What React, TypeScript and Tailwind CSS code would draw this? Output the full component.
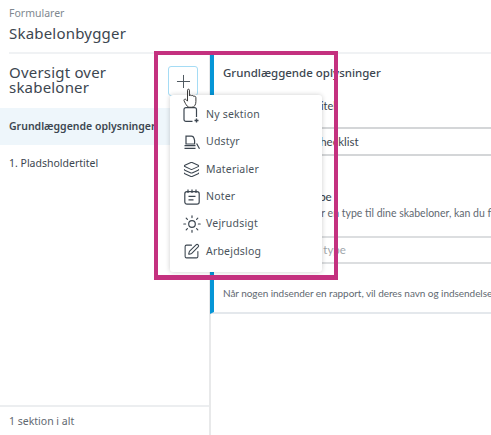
import { Plus, Layers, SquarePen } from 'lucide-react';

const InkStroke = '#3c4650';

const NewSectionIcon = () => (
  <svg width="17" height="16" viewBox="0 0 17 16" fill="none" stroke={InkStroke} strokeWidth="1.2">
    <path d="M9.5 14.4H3A2 2 0 0 1 1 12.4V2.6A2 2 0 0 1 3 .6H11.5A2 2 0 0 1 13.5 2.6V10" />
    <path d="M13.5 11.5v4M11.5 13.5h4" strokeWidth="1.4" />
  </svg>
);

const EquipmentIcon = () => (
  <svg width="16" height="15" viewBox="0 0 16 15" fill="none" stroke={InkStroke} strokeWidth="1.2">
    <path d="M2 9V1.2H7.5C9 1.2 9.6 2 10 3.2L10.6 5.5V9Z" />
    <path d="M.5 10.6H11.5M.5 13.4H11.5" />
    <path d="M12.6 8.5L15.5 13.8" />
  </svg>
);

const NotesIcon = () => (
  <svg width="16" height="16" viewBox="0 0 16 16" fill="none" stroke={InkStroke} strokeWidth="1.2">
    <rect x=".8" y="2.6" width="14.4" height="12.6" rx="2.2" />
    <path d="M4 .5v3.4M8 .5v3.4M12 .5v3.4" />
    <path d="M4.5 7.4H11.5M4.5 10.8H9.5" />
  </svg>
);

const WeatherIcon = () => (
  <svg width="18" height="18" viewBox="0 0 18 18" fill="none" stroke={InkStroke} strokeWidth="1.2" strokeLinecap="round">
    <circle cx="9" cy="9" r="3.3" />
    <path d="M9 .8v1.8M9 15.4v1.8M.8 9h1.8M15.4 9h1.8M3.2 3.2l1.2 1.2M13.6 13.6l1.2 1.2M3.2 14.8l1.2-1.2M13.6 4.4l1.2-1.2" />
  </svg>
);

const menuItems = [
  { label: 'Ny sektion', icon: <NewSectionIcon /> },
  { label: 'Udstyr', icon: <EquipmentIcon /> },
  { label: 'Materialer', icon: <Layers size={17} strokeWidth={1.5} color={InkStroke} /> },
  { label: 'Noter', icon: <NotesIcon /> },
  { label: 'Vejrudsigt', icon: <WeatherIcon /> },
  { label: 'Arbejdslog', icon: <SquarePen size={17} strokeWidth={1.5} color={InkStroke} /> },
];

const HandCursor = () => (
  <svg width="16" height="21" viewBox="0 0 18 24">
    <path
      d="M5 2.5C5 1 7.2 1 7.2 2.5V9C7.5 7.8 9.5 7.8 9.7 9.2C10 8.2 12 8.2 12.2 9.8C12.6 9 14.6 9.2 14.6 11V15.5C14.6 19 13 22 10 22H7.5C5 22 4 20 2.5 17.5L1 14.5C0.6 13 2.4 12 3.4 13.3L5 15Z"
      fill="#fff"
      stroke="#333"
      strokeWidth="1.1"
    />
  </svg>
);

export default function App() {
  return (
    <div className="relative h-[435px] w-[491px] overflow-hidden bg-white font-['Noto_Sans',sans-serif]">
      <header className="h-[52px] px-[9px] pt-[5px]">
        <div className="text-[10.5px] leading-[16px] text-[#808890]">Formularer</div>
        <div className="mt-[1px] text-[15px] leading-[22px] tracking-[0.2px] text-[#3c4650]">Skabelonbygger</div>
      </header>
      <div className="ml-[9px] h-[2px] bg-[#f0f2f4]" />

      <div className="flex h-[381px]">
        <aside className="flex w-[211px] shrink-0 flex-col border-r-2 border-[#e8e9ea]">
          <h2 className="h-[54px] w-[130px] pt-[11px] pl-[9px] text-[15px] leading-[15px] tracking-[0.2px] text-[#3c4650]">
            Oversigt over skabeloner
          </h2>
          <div className="flex h-[37px] items-center bg-[#eef6fb] pl-[9px] text-[10.5px] font-semibold whitespace-nowrap text-[#3c4650]">
            Grundlæggende oplysninger
          </div>
          <div className="flex h-[37px] items-center pl-[9px] text-[10.5px] text-[#3c4650]">1. Pladsholdertitel</div>
          <div className="mt-auto flex h-[30px] items-center border-t-2 border-[#eceef0] pt-[2px] pl-[9px] text-[10.5px] text-[#5f6971]">
            1 sektion i alt
          </div>
        </aside>

        <main className="-ml-px min-w-0 flex-1 overflow-hidden font-['Lato',sans-serif]">
          <section className="h-[260px] border-b-2 border-l-4 border-[#e4e8ec] border-l-[#0696d7] pl-[9px]">
            <h3 className="pt-[11px] font-['Noto_Sans',sans-serif] text-[11.5px] leading-[16px] font-medium text-[#3c4650]">
              Grundlæggende oplysninger
            </h3>
            <div className="mt-[18px] pl-[50px] text-[11px] leading-[14px] text-[#3c4650]">Skabelontitel</div>
            <div className="mt-[14px] flex h-[29px] items-center border-y-2 border-[#d4d6d8] pl-[57px] text-[11.5px] text-[#3c4650]">
              Daglig checklist
            </div>
            <div className="mt-[34px] pl-[40px] text-[11.5px] leading-[14px] font-medium text-[#3c4650]">Skabelontype</div>
            <div className="mt-[2px] text-[10.5px] leading-[14px] whitespace-nowrap text-[#5f6971]">
              Hvis du altid tilknytter en type til dine skabeloner, kan du fi
            </div>
            <div className="mt-[16px] flex h-[28px] items-center border-y-2 border-[#dcdee0] pl-[57px] text-[11.5px] text-[#a0a6ab]">
              Vælg en type
            </div>
            <div className="mt-[22px] text-[10px] leading-[14px] tracking-[-0.05px] whitespace-nowrap text-[#5f6971]">
              Når nogen indsender en rapport, vil deres navn og indsendelse
            </div>
          </section>
        </main>
      </div>

      {/* plus button */}
      <button className="absolute top-[66px] left-[168px] flex h-[30px] w-[30px] items-center justify-center rounded-[3px] border border-[#a5dcf5] bg-white">
        <Plus size={21} strokeWidth={1.1} color="#4a545c" />
      </button>

      {/* dropdown */}
      <div className="absolute top-[95px] left-[170px] h-[177px] w-[152px] rounded-[3px] bg-white py-[6px] pl-[12px] shadow-[0_0_5px_rgba(0,0,0,0.2)]">
        {menuItems.map((item) => (
          <div key={item.label} className="flex h-[27.4px] items-center gap-[5px] text-[10.5px] tracking-[0.2px] text-[#4a545c]">
            <span className="flex w-[19px] justify-center">{item.icon}</span>
            {item.label}
          </div>
        ))}
      </div>

      <div className="absolute top-[88px] left-[183px]">
        <HandCursor />
      </div>

      {/* highlight frame */}
      <div className="pointer-events-none absolute top-[51px] left-[154px] h-[229px] w-[184px] border-4 border-b-[5px] border-[#c4317f]" />
    </div>
  );
}
